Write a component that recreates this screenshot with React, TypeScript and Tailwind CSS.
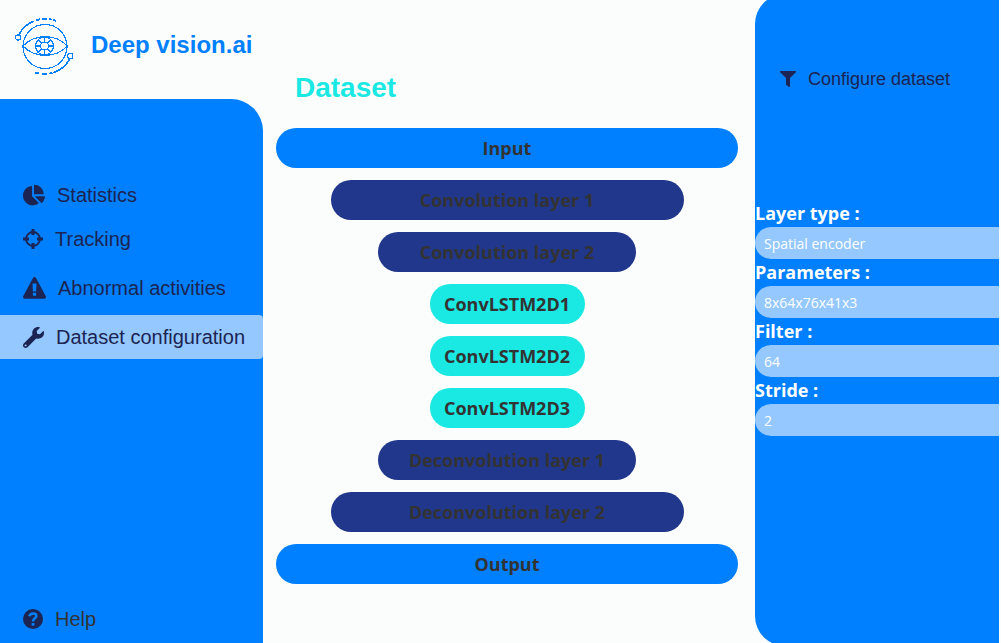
import React from "react";
import { FaChartPie, FaFilter, FaWrench } from "react-icons/fa";

const layers = [
  { name: "Input", style: "w-full bg-[#0080ff]" },
  { name: "Convolution layer 1", style: "w-[353px] bg-[#21378b]" },
  { name: "Convolution layer 2", style: "w-[258px] bg-[#21378b]" },
  { name: "ConvLSTM2D1", style: "w-[155px] bg-[#1ae8e3]" },
  { name: "ConvLSTM2D2", style: "w-[155px] bg-[#1ae8e3]" },
  { name: "ConvLSTM2D3", style: "w-[155px] bg-[#1ae8e3]" },
  { name: "Deconvolution layer 1", style: "w-[258px] bg-[#21378b]" },
  { name: "Deconvolution layer 2", style: "w-[353px] bg-[#21378b]" },
  { name: "Output", style: "w-full bg-[#0080ff]" },
];

const fields = [
  { id: "layer-type", label: "Layer type :", value: "Spatial encoder" },
  { id: "parameters", label: "Parameters :", value: "8x64x76x41x3" },
  { id: "filter", label: "Filter :", value: "64" },
  { id: "stride", label: "Stride :", value: "2" },
];

function Logo() {
  return (
    <svg
      className="size-[60px] shrink-0"
      viewBox="0 0 60 60"
      fill="none"
      stroke="#0080ff"
      strokeWidth="1.2"
      shapeRendering="crispEdges"
      aria-hidden="true"
    >
      <circle cx="30" cy="30.500" r="22" />
      <path d="M8 30C20 17.500 40 17.500 52.500 30C40 42.500 20 42.500 8 30Z" />
      <circle cx="29.500" cy="30" r="9" />
      <circle cx="29.500" cy="30" r="4" />
      <path d="M29.500 21v5M29.500 34v5M20.500 30h5M33.500 30h5M23.200 23.700l3.500 3.500M32.300 32.800l3.500 3.500M35.800 23.700l-3.500 3.500M26.700 32.800l-3.500 3.500" />
      <circle cx="3" cy="21.500" r="2.600" />
      <path strokeWidth="1.600" d="M4 18.500A28 28 0 0 1 18.500 5.200" />
      <path strokeWidth="1.800" d="M21 4.300l4-1M27 3.200h5M34 3.200l3 .4M38 4l3 .8" />
      <circle cx="55.300" cy="40" r="2.600" />
      <path strokeWidth="1.600" d="M54.700 43A28 28 0 0 1 38.500 56.500" />
      <path strokeWidth="1.800" d="M20 56.800l4 .6M27 58h5M34.500 57.600l3-.6" />
    </svg>
  );
}

function TrackingIcon() {
  return (
    <svg className="size-5" viewBox="0 0 20 20" fill="none" stroke="currentColor" aria-hidden="true">
      <circle cx="10" cy="10" r="7" strokeWidth="1.800" />
      <path strokeWidth="3" d="M10 0v6M10 14v6M0 10h6M14 10h6" />
    </svg>
  );
}

function WarningIcon() {
  return (
    <svg className="h-[22px] w-[23px]" viewBox="0 0 23 22" aria-hidden="true">
      <path
        fill="currentColor"
        fillRule="evenodd"
        d="M10 .9a1.700 1.700 0 0 1 3 0l9.700 18.200c.7 1.300-.1 2.600-1.500 2.600H1.800C.4 21.700-.4 20.400.3 19.100ZM9.500 6.500l.4 8h3.200l.4-8ZM9.900 15.800v3h3.200v-3Z"
      />
    </svg>
  );
}

function HelpIcon() {
  return (
    <svg className="size-5" viewBox="0 0 20 20" fill="none" aria-hidden="true">
      <circle cx="10" cy="10" r="10" fill="#1b2452" />
      <path
        stroke="#0080ff"
        strokeWidth="2.600"
        d="M6.200 7.200C7.200 5.200 8.500 4.500 10.200 4.500C12.100 4.500 13.300 5.600 13.300 7.100C13.300 9.500 10 9.200 10 12.600"
      />
      <path fill="#0080ff" d="M8.600 14h2.800v2.700H8.600Z" />
    </svg>
  );
}

const rowClass =
  "flex h-11 w-full items-center gap-3 rounded-r pl-[23px] text-xl text-[#1b2452]";

export default function App() {
  return (
    <div className="flex h-screen min-h-[640px] overflow-hidden bg-[#fbfdfc] font-['Liberation_Sans',Arial,sans-serif]">
      <div className="flex w-[263px] shrink-0 flex-col">
        <header className="flex h-[99px] items-start gap-4 pt-4 pl-[15px]">
          <Logo />
          <a
            href="#home"
            className="pt-[13px] text-2xl leading-8 font-bold whitespace-nowrap text-[#0080ff]"
          >
            Deep vision.ai
          </a>
        </header>
        <nav className="flex flex-1 flex-col rounded-tr-[32px] bg-[#0080ff] pt-[74px] pb-[2px]">
          <a href="#statistics" className={rowClass}>
            <FaChartPie className="size-[22px]" />
            Statistics
          </a>
          <a href="#tracking" className={rowClass}>
            <TrackingIcon />
            Tracking
          </a>
          <a href="#abnormal" className={`${rowClass} mt-[5px]`}>
            <WarningIcon />
            Abnormal activities
          </a>
          <a
            href="#configuration"
            aria-current="page"
            className={`${rowClass} mt-[5px] bg-[#94c8ff]`}
          >
            <FaWrench className="size-[21px]" />
            Dataset configuration
          </a>
          <a
            href="#help"
            className="mt-auto flex h-11 items-center gap-3 pl-[23px] text-xl text-[#333333]"
          >
            <HelpIcon />
            Help
          </a>
        </nav>
      </div>

      <main className="flex min-w-0 flex-1 flex-col pt-[70px] pr-[17px] pl-[13px]">
        <h1 className="pl-[19px] text-[28px] leading-9 font-bold text-[#1ae8e3]">
          Dataset
        </h1>
        <div className="mt-[22px] flex flex-col items-center gap-3 font-['Open_Sans','Noto_Sans',sans-serif]">
          {layers.map((layer) => (
            <button
              key={layer.name}
              type="button"
              className={`h-10 max-w-full rounded-full text-lg font-bold whitespace-nowrap text-[#333333] ${layer.style}`}
            >
              {layer.name}
            </button>
          ))}
        </div>
      </main>

      <aside className="-mt-[6px] mr-[2px] -mb-[3px] w-[244px] shrink-0 rounded-l-[30px] bg-[#0080ff] pt-[69px]">
        <h2 className="flex h-8 items-center gap-3 pl-[25px] text-lg text-[#1b2452]">
          <FaFilter className="size-4" />
          Configure dataset
        </h2>
        <form className="mt-[105px] font-['Open_Sans','Noto_Sans',sans-serif]">
          {fields.map((field) => (
            <div key={field.id}>
              <label
                htmlFor={field.id}
                className="block text-lg leading-[27px] font-bold text-white"
              >
                {field.label}
              </label>
              <input
                id={field.id}
                type="text"
                defaultValue={field.value}
                className="block h-8 w-full rounded-l-full bg-[#94c8ff] pl-[9px] text-sm text-white outline-none"
              />
            </div>
          ))}
        </form>
      </aside>
    </div>
  );
}
